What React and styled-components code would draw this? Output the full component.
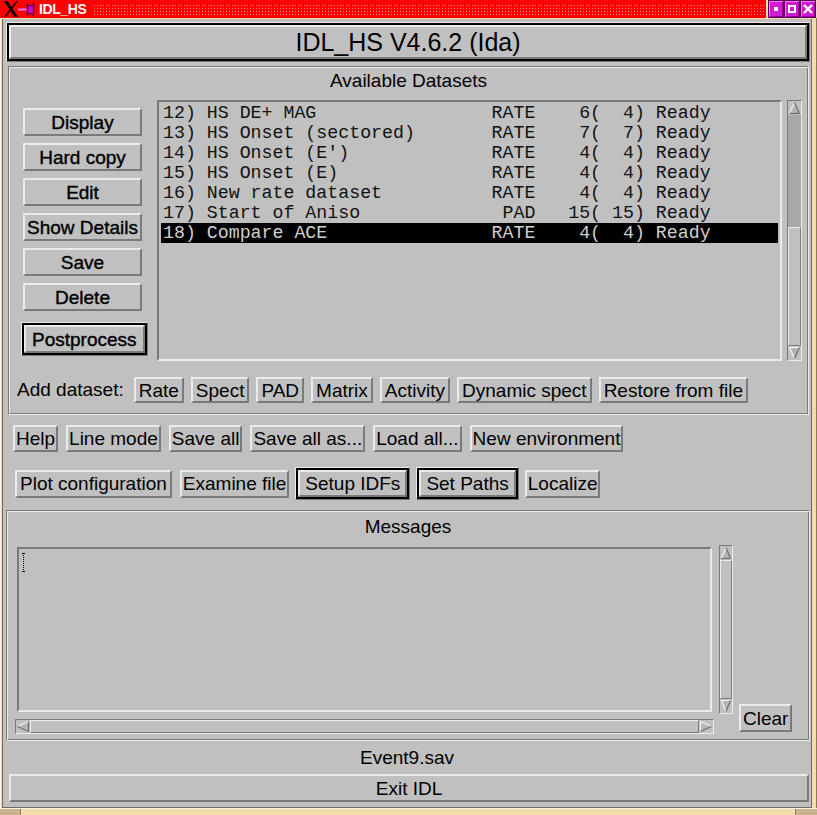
import React from "react";
import styled, { createGlobalStyle } from "styled-components";

const GRAY = "#c0c0c0";
const LIGHT = "#ebebeb";
const DARK = "#7a7a7a";
const TAN = "#f3dcae";
const TAN_DARK = "#c9b48f";

const Global = createGlobalStyle`
  html, body { margin: 0; padding: 0; background: #ffffff; }
  body { font-family: "Liberation Sans", Arial, sans-serif; color: #000; }
`;

const Frame = styled.div`
  width: 817px;
  height: 815px;
  box-sizing: border-box;
  background: ${TAN};
  display: flex;
  flex-direction: column;
  box-shadow: inset -1px 0 0 #8c7a5a, inset 1px 0 0 #fff3d8;
  overflow: hidden;
`;

const TitleBar = styled.div`
  height: 18px;
  flex: none;
  display: flex;
  align-items: center;
  background: #ff0000;
  padding-left: 4px;
`;

const TitleText = styled.span`
  color: #fff;
  font-family: "Liberation Sans", Arial, sans-serif;
  font-weight: bold;
  font-size: 14px;
  letter-spacing: -0.4px;
  margin-left: 4px;
  line-height: 18px;
`;

const Dots = styled.div`
  flex: 1;
  height: 12px;
  margin: 0 2px 0 6px;
  background-color: #ff8c8c;
  background-image: linear-gradient(to right, #ff0000 2px, transparent 2px),
    linear-gradient(to bottom, #ff0000 2px, transparent 2px);
  background-size: 3px 3px;
`;

const TitleSep = styled.div`
  width: 2px;
  align-self: stretch;
  background: ${TAN};
`;

const WinBtns = styled.div`
  display: flex;
  align-self: stretch;
  background: ${TAN};
  padding-right: 1px;
`;

const WinBtn = styled.div`
  width: 16px;
  height: 18px;
  box-sizing: border-box;
  background: #d21ad2;
  border: 1px solid #5c005c;
  box-shadow: inset 1px 1px 0 #f27af2, inset -1px -1px 0 #9a009a;
  display: flex;
  align-items: center;
  justify-content: center;
`;

const MinGlyph = styled.span`
  width: 4px;
  height: 4px;
  background: #fff;
`;

const MaxGlyph = styled.span`
  width: 8px;
  height: 8px;
  box-sizing: border-box;
  border: 2px solid #fff;
`;

const Body = styled.div`
  flex: 1;
  margin: 1px 5px 0 2px;
  background: ${GRAY};
  border-left: 1px solid #6a6a6a;
  border-right: 1px solid #6a6a6a;
  border-bottom: 1px solid #6a6a6a;
  display: flex;
  flex-direction: column;
  min-height: 0;
`;

const BottomEdge = styled.div`
  height: 7px;
  flex: none;
  display: flex;
  border-top: 1px solid #fff3d8;
  box-sizing: border-box;
`;

const EdgeCorner = styled.div`
  width: ${(p) => p.$w}px;
  background: ${TAN_DARK};
  border-left: ${(p) => (p.$right ? "1px solid #8c7a5a" : "none")};
  border-right: ${(p) => (p.$right ? "none" : "1px solid #8c7a5a")};
`;

const EdgeMid = styled.div`
  flex: 1;
  background: ${TAN};
`;

const Btn = styled.button`
  box-sizing: border-box;
  appearance: none;
  margin: 0;
  font-family: "Liberation Sans", Arial, sans-serif;
  font-size: ${(p) => p.$fs || 19}px;
  color: #000;
  background: ${GRAY};
  border: 2px solid;
  border-color: ${LIGHT} ${DARK} ${DARK} ${LIGHT};
  padding: 0 ${(p) => (p.$px ?? 2)}px;
  height: ${(p) => p.$h || 27}px;
  width: ${(p) => (p.$full ? "100%" : p.$w ? p.$w + "px" : "auto")};
  margin-left: ${(p) => p.$ml || 0}px;
  margin-top: ${(p) => p.$mt || 0}px;
  margin-bottom: ${(p) => p.$mb || 0}px;
  display: inline-flex;
  align-items: center;
  justify-content: center;
  white-space: nowrap;
  line-height: 1;
  -webkit-text-stroke: ${(p) => (p.$heavy ? "0.4px #000" : "0")};
  flex: none;
  cursor: default;
`;

const Ring = styled.span`
  box-sizing: border-box;
  display: flex;
  flex: none;
  border: 1px solid;
  border-color: ${LIGHT} ${DARK} ${DARK} ${LIGHT};
  background: #000;
  padding: 2px;
  height: ${(p) => p.$h}px;
  margin-top: ${(p) => p.$mt || 0}px;
  margin-left: ${(p) => p.$ml || 0}px;
  margin-right: ${(p) => p.$mr || 0}px;
`;

const Panel = styled.div`
  box-sizing: border-box;
  height: ${(p) => p.$h}px;
  margin: ${(p) => p.$mt}px ${(p) => p.$mr}px 0 ${(p) => p.$ml}px;
  border: 1px solid;
  border-color: ${DARK} ${LIGHT} ${LIGHT} ${DARK};
  box-shadow: inset 1px 1px 0 ${LIGHT}, inset -1px -1px 0 ${DARK};
  padding: 1px;
  display: flex;
  flex-direction: column;
  flex: none;
`;

const Label = styled.div`
  height: ${(p) => p.$h}px;
  line-height: ${(p) => p.$h}px;
  margin-bottom: ${(p) => p.$mb || 0}px;
  text-align: center;
  font-size: 19px;
  flex: none;
`;

const MainRow = styled.div`
  display: flex;
  height: 261px;
  padding-left: 11px;
  flex: none;
`;

const Column = styled.div`
  width: 127px;
  display: flex;
  flex-direction: column;
  align-items: flex-start;
  gap: 7px;
  padding-top: 8px;
  flex: none;
`;

const ListBox = styled.div`
  box-sizing: border-box;
  width: 625px;
  height: 261px;
  margin-left: 9px;
  border: 2px solid;
  border-color: ${DARK} ${LIGHT} ${LIGHT} ${DARK};
  padding: 1px 2px;
  overflow: hidden;
  flex: none;
`;

const ListRow = styled.div`
  height: 20px;
  line-height: 20px;
  padding-left: 2px;
  white-space: pre;
  font-family: "Liberation Mono", "Courier New", monospace;
  font-size: 18.25px;
  color: ${(p) => (p.$sel ? "#d0d0d0" : "#111")};
  background: ${(p) => (p.$sel ? "#000" : "transparent")};
`;

const ScrollBox = styled.div`
  box-sizing: border-box;
  width: ${(p) => p.$w}px;
  height: ${(p) => p.$h}px;
  margin-left: ${(p) => p.$ml || 0}px;
  border: 1px solid;
  border-color: ${DARK} ${LIGHT} ${LIGHT} ${DARK};
  background: ${GRAY};
  display: flex;
  flex-direction: ${(p) => (p.$horiz ? "row" : "column")};
  flex: none;
`;

const Trough = styled.div`
  flex: 1;
  display: flex;
  flex-direction: ${(p) => (p.$horiz ? "row" : "column")};
  background: ${(p) => (p.$dark ? "#a8a8a8" : GRAY)};
`;

const Gap = styled.div`
  flex: none;
  height: ${(p) => p.$size}px;
`;

const Thumb = styled.div`
  box-sizing: border-box;
  flex: ${(p) => (p.$size ? "none" : 1)};
  height: ${(p) => (p.$size ? p.$size + "px" : "auto")};
  background: ${GRAY};
  border: 1px solid;
  border-color: ${LIGHT} ${DARK} ${DARK} ${LIGHT};
`;

const ArrowBox = styled.svg`
  flex: none;
  display: block;
`;

const AddRow = styled.div`
  display: flex;
  align-items: center;
  height: 26px;
  margin-top: 16px;
  padding-left: 7px;
  gap: 7px;
  flex: none;
`;

const AddLabel = styled.span`
  font-size: 19px;
  margin-right: 3px;
`;

const ButtonRow = styled.div`
  display: flex;
  align-items: center;
  height: ${(p) => p.$h}px;
  margin-top: ${(p) => p.$mt}px;
  padding-left: ${(p) => p.$pl}px;
  gap: ${(p) => p.$gap}px;
  flex: none;
`;

const MsgRow = styled.div`
  display: flex;
  align-items: flex-end;
  height: 189px;
  padding-left: 7px;
  flex: none;
`;

const Scrolled = styled.div`
  display: grid;
  grid-template-columns: 699px 14px;
  grid-template-rows: 169px 15px;
  column-gap: 5px;
  row-gap: 5px;
  flex: none;
`;

const TextArea = styled.div`
  box-sizing: border-box;
  margin: 2px;
  border: 2px solid;
  border-color: ${DARK} ${LIGHT} ${LIGHT} ${DARK};
  padding: 4px 0 0 3px;
`;

const Caret = styled.span`
  display: block;
  position: relative;
  width: 1px;
  height: 19px;
  margin-left: 1px;
  background: repeating-linear-gradient(to bottom, #000 0 1px, transparent 1px 2px);
  &::before,
  &::after {
    content: "";
    position: absolute;
    left: -1px;
    width: 3px;
    height: 1px;
    background: #000;
  }
  &::before { top: 0; }
  &::after { bottom: 0; }
`;

const FileLabel = styled.div`
  height: 33px;
  line-height: 33px;
  text-align: center;
  font-size: 19px;
  flex: none;
`;

const ExitWrap = styled.div`
  display: flex;
  padding: 0 2px 0 6px;
  flex: none;
`;

function Arrow({ dir, w, h }) {
  let poly, light, dark;
  const cx = w / 2;
  const cy = h / 2;
  if (dir === "up") {
    poly = `${cx},1.5 ${w - 1.5},${h - 1.5} 1.5,${h - 1.5}`;
    light = [[cx, 1.5, 1.5, h - 1.5]];
    dark = [[cx, 1.5, w - 1.5, h - 1.5], [1.5, h - 1.5, w - 1.5, h - 1.5]];
  } else if (dir === "down") {
    poly = `1.5,1.5 ${w - 1.5},1.5 ${cx},${h - 1.5}`;
    light = [[1.5, 1.5, w - 1.5, 1.5], [1.5, 1.5, cx, h - 1.5]];
    dark = [[w - 1.5, 1.5, cx, h - 1.5]];
  } else if (dir === "left") {
    poly = `1.5,${cy} ${w - 1.5},1.5 ${w - 1.5},${h - 1.5}`;
    light = [[1.5, cy, w - 1.5, 1.5]];
    dark = [[1.5, cy, w - 1.5, h - 1.5], [w - 1.5, 1.5, w - 1.5, h - 1.5]];
  } else {
    poly = `1.5,1.5 ${w - 1.5},${cy} 1.5,${h - 1.5}`;
    light = [[1.5, 1.5, 1.5, h - 1.5], [1.5, 1.5, w - 1.5, cy]];
    dark = [[1.5, h - 1.5, w - 1.5, cy]];
  }
  return (
    <ArrowBox width={w} height={h} viewBox={`0 0 ${w} ${h}`}>
      <polygon points={poly} fill="#b4b4b4" />
      {light.map((l, i) => (
        <line key={"l" + i} x1={l[0]} y1={l[1]} x2={l[2]} y2={l[3]} stroke="#f2f2f2" strokeWidth="1.2" />
      ))}
      {dark.map((l, i) => (
        <line key={"d" + i} x1={l[0]} y1={l[1]} x2={l[2]} y2={l[3]} stroke="#6e6e6e" strokeWidth="1.2" />
      ))}
    </ArrowBox>
  );
}

function XLogo() {
  return (
    <svg width="14" height="16" viewBox="0 0 14 16" style={{ display: "block", flex: "none" }}>
      <polygon points="0,0 3.6,0 14,16 10.4,16" fill="#000" />
      <line x1="13.2" y1="0" x2="0.8" y2="16" stroke="#000" strokeWidth="1.4" />
    </svg>
  );
}

function PinIcon() {
  return (
    <svg width="17" height="16" viewBox="0 0 17 16" style={{ display: "block", flex: "none" }}>
      <line x1="0" y1="8.5" x2="9" y2="8.5" stroke="#f070f0" strokeWidth="2" />
      <rect x="9.5" y="4.5" width="6" height="8" fill="#d000d0" stroke="#4a004a" strokeWidth="1" />
      <line x1="9.5" y1="2" x2="9.5" y2="15" stroke="#4a004a" strokeWidth="1.5" />
      <line x1="15.5" y1="2" x2="15.5" y2="15" stroke="#4a004a" strokeWidth="1.5" />
    </svg>
  );
}

function CloseGlyph() {
  return (
    <svg width="10" height="10" viewBox="0 0 10 10" style={{ display: "block" }}>
      <line x1="1" y1="1" x2="9" y2="9" stroke="#fff" strokeWidth="2.4" />
      <line x1="9" y1="1" x2="1" y2="9" stroke="#fff" strokeWidth="2.4" />
    </svg>
  );
}

const datasets = [
  { n: 12, name: "HS DE+ MAG", type: "RATE", a: 6, b: 4 },
  { n: 13, name: "HS Onset (sectored)", type: "RATE", a: 7, b: 7 },
  { n: 14, name: "HS Onset (E')", type: "RATE", a: 4, b: 4 },
  { n: 15, name: "HS Onset (E)", type: "RATE", a: 4, b: 4 },
  { n: 16, name: "New rate dataset", type: "RATE", a: 4, b: 4 },
  { n: 17, name: "Start of Aniso", type: "PAD", a: 15, b: 15 },
  { n: 18, name: "Compare ACE", type: "RATE", a: 4, b: 4, sel: true },
];

function fmt(d) {
  return (
    (d.n + ")").padEnd(4) +
    d.name.padEnd(26) +
    d.type.padStart(4) +
    String(d.a).padStart(5) +
    "(" +
    String(d.b).padStart(3) +
    ") Ready"
  );
}

const leftButtons = ["Display", "Hard copy", "Edit", "Show Details", "Save", "Delete"];
const addButtons = ["Rate", "Spect", "PAD", "Matrix", "Activity", "Dynamic spect", "Restore from file"];
const row2 = ["Help", "Line mode", "Save all", "Save all as...", "Load all...", "New environment"];

export default function App() {
  return (
    <>
      <Global />
      <Frame>
        <TitleBar>
          <XLogo />
          <PinIcon />
          <TitleText>IDL_HS</TitleText>
          <Dots />
          <TitleSep />
          <WinBtns>
            <WinBtn><MinGlyph /></WinBtn>
            <WinBtn><MaxGlyph /></WinBtn>
            <WinBtn><CloseGlyph /></WinBtn>
          </WinBtns>
        </TitleBar>
        <Body>
          <Ring $h={40} $mt={3} $ml={3} $mr={1}>
            <Btn $fs={25} $h={34} $full>IDL_HS V4.6.2 (Ida)</Btn>
          </Ring>

          <Panel $h={349} $mt={4} $ml={5} $mr={2}>
            <Label $h={26} $mb={6}>Available Datasets</Label>
            <MainRow>
              <Column>
                {leftButtons.map((t) => (
                  <Btn key={t} $w={119} $h={28} $ml={2} $heavy>{t}</Btn>
                ))}
                <Ring $h={34} $mt={4}>
                  <Btn $h={28} $px={6} $heavy>Postprocess</Btn>
                </Ring>
              </Column>
              <ListBox>
                {datasets.map((d) => (
                  <ListRow key={d.n} $sel={d.sel}>{fmt(d)}</ListRow>
                ))}
              </ListBox>
              <ScrollBox $w={15} $h={261} $ml={5}>
                <Arrow dir="up" w={13} h={14} />
                <Trough $dark>
                  <Gap $size={112} />
                  <Thumb $size={119} />
                </Trough>
                <Arrow dir="down" w={13} h={14} />
              </ScrollBox>
            </MainRow>
            <AddRow>
              <AddLabel>Add dataset:</AddLabel>
              {addButtons.map((t) => (
                <Btn key={t} $h={26} $px={3}>{t}</Btn>
              ))}
            </AddRow>
          </Panel>

          <ButtonRow $h={27} $mt={10} $pl={10} $gap={8}>
            {row2.map((t) => (
              <Btn key={t} $h={27} $px={1}>{t}</Btn>
            ))}
          </ButtonRow>

          <ButtonRow $h={33} $mt={15} $pl={12} $gap={6}>
            <Btn $h={28} $px={3}>Plot configuration</Btn>
            <Btn $h={28} $px={1} $ml={2}>Examine file</Btn>
            <Ring $h={33}>
              <Btn $h={27} $px={5}>Setup IDFs</Btn>
            </Ring>
            <Ring $h={33}>
              <Btn $h={27} $px={5}>Set Paths</Btn>
            </Ring>
            <Btn $h={28} $px={1}>Localize</Btn>
          </ButtonRow>

          <Panel $h={231} $mt={10} $ml={3} $mr={1}>
            <Label $h={30} $mb={3}>Messages</Label>
            <MsgRow>
              <Scrolled>
                <TextArea>
                  <Caret />
                </TextArea>
                <ScrollBox $w={14} $h={169}>
                  <Arrow dir="up" w={12} h={14} />
                  <Trough>
                    <Thumb />
                  </Trough>
                  <Arrow dir="down" w={12} h={14} />
                </ScrollBox>
                <ScrollBox $w={699} $h={15} $horiz>
                  <Arrow dir="left" w={14} h={13} />
                  <Trough $horiz>
                    <Thumb />
                  </Trough>
                  <Arrow dir="right" w={14} h={13} />
                </ScrollBox>
              </Scrolled>
              <Btn $h={28} $px={2} $ml={6} $mb={2}>Clear</Btn>
            </MsgRow>
          </Panel>

          <FileLabel>Event9.sav</FileLabel>
          <ExitWrap>
            <Btn $h={28} $full>Exit IDL</Btn>
          </ExitWrap>
        </Body>
        <BottomEdge>
          <EdgeCorner $w={20} />
          <EdgeMid />
          <EdgeCorner $w={21} $right />
        </BottomEdge>
      </Frame>
    </>
  );
}
